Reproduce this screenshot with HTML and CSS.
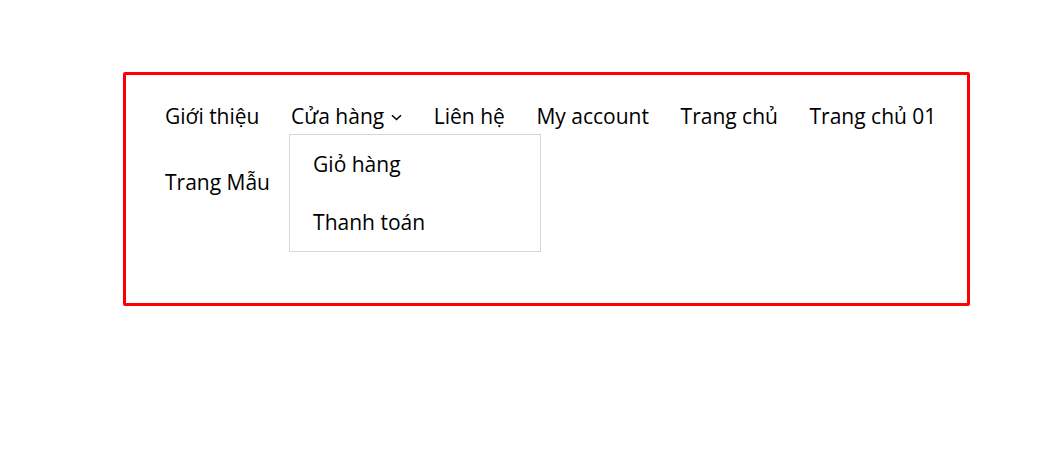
FILE: index.html
```html
<!DOCTYPE html>
<html lang="vi">
<head>
<meta charset="utf-8">
<title>Menu</title>
<link rel="stylesheet" href="styles.css">
</head>
<body>
<div class="frame">
  <nav class="nav">
    <ul class="menu">
      <li class="item"><a class="link" href="#">Giới thiệu</a></li>
      <li class="item has-sub">
        <a class="link" href="#">Cửa hàng<svg class="chev" width="11" height="7" viewBox="0 0 11 7"><path d="M1 1.2 L5.5 5.5 L10 1.2" fill="none" stroke="#000" stroke-width="1.5"/></svg></a>
        <ul class="sub">
          <li><a class="sublink" href="#">Giỏ hàng</a></li>
          <li><a class="sublink" href="#">Thanh toán</a></li>
        </ul>
      </li>
      <li class="item"><a class="link" href="#">Liên hệ</a></li>
      <li class="item"><a class="link" href="#">My account</a></li>
      <li class="item"><a class="link" href="#">Trang chủ</a></li>
      <li class="item"><a class="link" href="#">Trang chủ 01</a></li>
      <li class="item"><a class="link" href="#">Trang Mẫu</a></li>
    </ul>
  </nav>
</div>
</body>
</html>
```
FILE: styles.css
```css
* { box-sizing: border-box; }
html, body { margin: 0; padding: 0; background: #fff; }
body {
  font-family: "Open Sans", "Noto Sans", sans-serif;
  font-size: 21px;
  color: #000;
  padding: 72px 0 0 123px;
}
.frame {
  width: 847px;
  height: 234px;
  border: 3px solid #ff0000;
  border-radius: 2px;
  padding: 8px 0 0 23.2px;
}
.menu {
  list-style: none;
  margin: 0;
  padding: 0;
  display: flex;
  flex-wrap: wrap;
}
.item {
  position: relative;
  padding: 0 15.8px;
}
.link {
  display: flex;
  align-items: center;
  height: 66px;
  color: #000;
  text-decoration: none;
  white-space: nowrap;
}
.chev { margin-left: 7px; margin-top: 2px; }
.sub {
  position: absolute;
  top: 51px;
  left: 13.8px;
  width: 252px;
  margin: 0;
  padding: 0;
  list-style: none;
  background: #fff;
  border: 1px solid #d6d6d6;
  z-index: 2;
}
.sublink {
  display: flex;
  align-items: center;
  height: 58px;
  padding-left: 23px;
  color: #000;
  text-decoration: none;
}
```
